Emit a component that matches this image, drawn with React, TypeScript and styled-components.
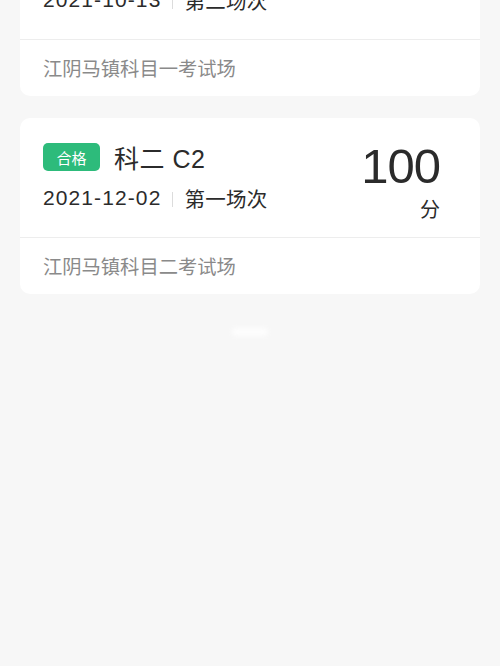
import React from 'react'
import styled, { createGlobalStyle } from 'styled-components'

const GlobalStyle = createGlobalStyle`
  html, body {
    margin: 0;
    padding: 0;
    background: #f7f7f7;
  }
  body {
    font-family: "Liberation Sans", "Noto Sans CJK SC", sans-serif;
    overflow: hidden;
  }
`

const Page = styled.div`
  width: 500px;
  height: 666px;
  overflow: hidden;
  background: #f7f7f7;
`

// list is scrolled so the first record's header sits above the fold
const List = styled.div`
  display: flex;
  flex-direction: column;
  gap: 22px;
  padding: 0 20px;
  margin-top: -80px;
`

const Card = styled.div`
  background: #fff;
  border-radius: 10px;
  overflow: hidden;
`

const Header = styled.div`
  height: 120px;
  box-sizing: border-box;
  padding: 25px 40px 0 23px;
  display: flex;
  justify-content: space-between;
  border-bottom: 1.5px solid #ededed;
`

const Info = styled.div`
  display: flex;
  flex-direction: column;
`

const TitleRow = styled.div`
  display: flex;
  align-items: center;
  height: 28px;
`

const Badge = styled.span<{ $pass: boolean }>`
  width: 57px;
  height: 28px;
  border-radius: 5px;
  background: ${(p) => (p.$pass ? '#2dbb7b' : '#f26b5b')};
  color: #fff;
  font-family: "Noto Sans CJK SC", sans-serif;
  font-size: 15px;
  display: flex;
  align-items: center;
  justify-content: center;
  margin-right: 14px;
`

const Subject = styled.span`
  font-size: 25px;
  color: #2b2b2b;
  font-family: "Liberation Sans", "Noto Sans CJK SC", sans-serif;
  letter-spacing: 0.5px;
`

const DateRow = styled.div`
  display: flex;
  align-items: center;
  margin-top: 12px;
  font-size: 21px;
  letter-spacing: 1.1px;
  color: #2b2b2b;
`

const Sep = styled.span`
  width: 1px;
  height: 15px;
  background: #dcdcdc;
  margin: 2px 11px 0 11px;
`

const Session = styled.span`
  font-family: "Noto Sans CJK SC", sans-serif;
  font-size: 20.5px;
  letter-spacing: 0.3px;
`

const Score = styled.div`
  display: flex;
  flex-direction: column;
  align-items: flex-end;
  margin-top: 1px;
`

const Points = styled.span`
  font-size: 49px;
  line-height: 44px;
  color: #2b2b2b;
  letter-spacing: -1px;
`

const Unit = styled.span`
  font-family: "Noto Sans CJK SC", sans-serif;
  font-size: 20px;
  color: #2b2b2b;
  margin-top: 6px;
`

const Footer = styled.div`
  height: 56px;
  padding: 0 23px;
  display: flex;
  align-items: center;
  font-family: "Noto Sans CJK SC", sans-serif;
  font-size: 19.3px;
  color: #8a8a8a;
`

const Loading = styled.div`
  width: 36px;
  height: 8px;
  margin: 34px auto 0;
  border-radius: 4px;
  background: #ffffff;
  filter: blur(2px);
  opacity: 0.8;
`

type Exam = {
  pass: boolean
  subject: string
  date: string
  session: string
  score?: number
  place: string
}

const exams: Exam[] = [
  { pass: true, subject: '科一 C2', date: '2021-10-13', session: '第二场次', place: '江阴马镇科目一考试场' },
  { pass: true, subject: '科二 C2', date: '2021-12-02', session: '第一场次', score: 100, place: '江阴马镇科目二考试场' }
]

const App = () => {
  return (
    <Page>
      <GlobalStyle />
      <List>
        {exams.map((e) => (
          <Card key={e.date}>
            <Header>
              <Info>
                <TitleRow>
                  <Badge $pass={e.pass}>{e.pass ? '合格' : '不合格'}</Badge>
                  <Subject>{e.subject}</Subject>
                </TitleRow>
                <DateRow>
                  <span>{e.date}</span>
                  <Sep />
                  <Session>{e.session}</Session>
                </DateRow>
              </Info>
              {e.score !== undefined && (
                <Score>
                  <Points>{e.score}</Points>
                  <Unit>分</Unit>
                </Score>
              )}
            </Header>
            <Footer>{e.place}</Footer>
          </Card>
        ))}
      </List>
      <Loading />
    </Page>
  )
}

export default App
